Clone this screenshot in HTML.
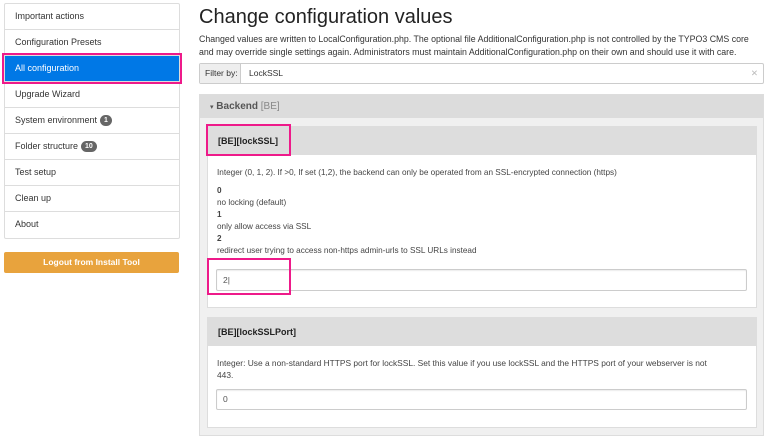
<!DOCTYPE html>
<html><head><meta charset="utf-8"><style>
*{box-sizing:border-box;margin:0;padding:0}
body{width:768px;height:439px;overflow:hidden;background:#fff;font-family:"Liberation Sans",sans-serif;color:#333;position:relative;font-size:9px}
.a{position:absolute}
.nav{left:4px;top:3px;width:176px;border:1px solid #ddd;border-radius:2px}
.nav div{height:26px;line-height:25px;padding-left:10px;border-bottom:1px solid #ddd;font-size:9px;color:#333}
.nav div:last-child{border-bottom:0}
.nav .act{background:#0078e6;color:#fff}
.badge{display:inline-block;background:#666;color:#fff;border-radius:7px;font-size:7px;font-weight:bold;padding:0 4px;line-height:11px;margin-left:3px;vertical-align:1px}
.pink{border:2px solid #ee1a8a}
.inp{border:1px solid #ccc;border-radius:2px;background:#fff;box-shadow:inset 0 1px 1px rgba(0,0,0,.08);font-size:8.5px;padding-left:6px;color:#555}
</style></head><body>
<div class="a nav">
<div>Important actions</div>
<div>Configuration Presets</div>
<div class="act">All configuration</div>
<div>Upgrade Wizard</div>
<div>System environment<span class="badge">1</span></div>
<div>Folder structure<span class="badge">10</span></div>
<div>Test setup</div>
<div>Clean up</div>
<div>About</div>
</div>
<div class="a pink" style="left:2px;top:53px;width:180px;height:31px"></div>
<div class="a" style="left:4px;top:252px;width:175px;height:21px;background:#e8a33d;border-radius:2px;color:#fff;font-weight:bold;font-size:8.5px;text-align:center;line-height:21px">Logout from Install Tool</div>

<div class="a" style="left:199px;top:6px;font-size:20px;color:#222">Change configuration values</div>
<div class="a" style="left:199px;top:33px;width:575px;font-size:8.8px;line-height:12.5px;color:#333;white-space:nowrap">Changed values are written to LocalConfiguration.php. The optional file AdditionalConfiguration.php is not controlled by the TYPO3 CMS core<br>and may override single settings again. Administrators must maintain AdditionalConfiguration.php on their own and should use it with care.</div>
<div class="a" style="left:199px;top:63px;width:565px;height:21px;border:1px solid #ccc;border-radius:2px;font-size:8.5px">
<div class="a" style="left:0;top:0;width:41px;height:19px;background:#eee;border-right:1px solid #ccc;line-height:19px;padding-left:5px">Filter by:</div>
<div class="a" style="left:49px;top:0;line-height:19px">LockSSL</div>
<div class="a" style="right:5px;top:0;line-height:19px;color:#bbb">✕</div>
</div>

<div class="a" style="left:199px;top:94px;width:565px;height:342px;border:1px solid #ddd;background:#f0f0f0">
<div style="height:23px;background:#dcdcdc;line-height:23px;padding-left:10px;font-size:10px;color:#555"><span style="font-size:7px">▾</span> <b>Backend</b> <span style="color:#888">[BE]</span></div>
</div>

<div class="a" style="left:207px;top:126px;width:550px;height:182px;border:1px solid #ddd;background:#fff">
<div style="height:28px;background:#ddd;line-height:28px;padding-left:10px;font-weight:bold;font-size:9px;color:#222">[BE][lockSSL]</div>
<div style="padding:12px 0 0 9px;font-size:8.2px;line-height:12px;color:#444">
Integer (0, 1, 2). If &gt;0, If set (1,2), the backend can only be operated from an SSL-encrypted connection (https)
<div style="margin-top:6px"><b>0</b><br>no locking (default)<br><b>1</b><br>only allow access via SSL<br><b>2</b><br>redirect user trying to access non-https admin-urls to SSL URLs instead</div>
</div>
<div class="a inp" style="left:8px;top:142px;width:531px;height:22px;line-height:20px">2|</div>
</div>
<div class="a pink" style="left:206px;top:124px;width:85px;height:32px"></div>
<div class="a pink" style="left:207px;top:258px;width:84px;height:37px"></div>

<div class="a" style="left:207px;top:317px;width:550px;height:111px;border:1px solid #ddd;background:#fff">
<div style="height:28px;background:#ddd;line-height:28px;padding-left:10px;font-weight:bold;font-size:9px;color:#222">[BE][lockSSLPort]</div>
<div style="padding:11px 0 0 9px;font-size:8.4px;line-height:12px;color:#444;width:500px">Integer: Use a non-standard HTTPS port for lockSSL. Set this value if you use lockSSL and the HTTPS port of your webserver is not<br>443.</div>
<div class="a inp" style="left:8px;top:71px;width:531px;height:21px;line-height:19px">0</div>
</div>
</body></html>
